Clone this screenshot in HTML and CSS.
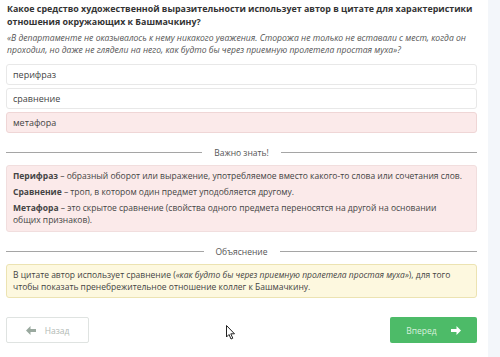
FILE: index.html
```html
<!DOCTYPE html>
<html lang="ru">
<head>
    <meta charset="UTF-8">
    <meta name="viewport" content="width=device-width, initial-scale=1.0">
    <title>Задание</title>
    <link rel="stylesheet" href="styles.css">
</head>
<body>
    <div class="page">
        <div class="task">
            <h1 class="question">Какое средство художественной выразительности использует автор в цитате для характеристики отношения окружающих к Башмачкину?</h1>
            <p class="quote">«В департаменте не оказывалось к нему никакого уважения. Сторожа не только не вставали с мест, когда он проходил, но даже не глядели на него, как будто бы через приемную пролетела простая муха»?</p>

            <div class="options">
                <div class="option">перифраз</div>
                <div class="option">сравнение</div>
                <div class="option option-wrong">метафора</div>
            </div>

            <div class="divider"><span>Важно знать!</span></div>
            <div class="note note-pink">
                <p><b>Перифраз</b> – образный оборот или выражение, употребляемое вместо какого-то слова или сочетания слов.</p>
                <p><b>Сравнение</b> – троп, в котором один предмет уподобляется другому.</p>
                <p><b>Метафора</b> – это скрытое сравнение (свойства одного предмета переносятся на другой на основании общих признаков).</p>
            </div>

            <div class="divider"><span>Объяснение</span></div>
            <div class="note note-yellow">
                <p>В цитате автор использует сравнение (<i>«как будто бы через приемную пролетела простая муха»</i>), для того чтобы показать пренебрежительное отношение коллег к Башмачкину.</p>
            </div>

            <div class="nav">
                <button class="btn btn-back">
                    <svg width="10" height="9" viewBox="0 0 10 9"><path d="M0 4.5 L4.5 0 L4.5 3 L10 3 L10 6 L4.5 6 L4.5 9 Z" fill="#9aa99f"/></svg>
                    Назад
                </button>
                <button class="btn btn-next">
                    Вперед
                    <svg width="10" height="9" viewBox="0 0 10 9"><path d="M10 4.5 L5.5 0 L5.5 3 L0 3 L0 6 L5.5 6 L5.5 9 Z" fill="#fff"/></svg>
                </button>
            </div>
            <svg class="cursor" width="10" height="15" viewBox="0 0 10 15"><path d="M0.5 0.5 L0.5 12 L3 9.5 L5 14 L6.8 13.2 L4.8 8.8 L8.5 8.8 Z" fill="#fff" stroke="#222" stroke-width="1"/></svg>
        </div>
        <div class="side"></div>
    </div>
</body>
</html>
```

FILE: styles.css
```css
body {
    margin: 0;
    font-family: "Open Sans", Arial, sans-serif;
    color: #444;
    background: #fff;
}
.page {
    display: flex;
    width: 500px;
    height: 357px;
    overflow: hidden;
}
.task {
    position: relative;
    width: 471px;
    padding: 0 11px 0 6px;
}
.side {
    flex: 1;
    background: #f3f6fa;
}
.question {
    margin: 2px 0 0 1px;
    font-size: 8.9px;
    line-height: 13px;
    font-weight: bold;
    color: #333;
}
.quote {
    margin: 4px 0 0 1px;
    font-size: 8.6px;
    line-height: 12px;
    font-style: italic;
    color: #555;
}
.options {
    margin-top: 8px;
    display: flex;
    flex-direction: column;
    gap: 3px;
}
.option {
    height: 19px;
    line-height: 19px;
    padding-left: 6px;
    border: 1px solid #e8e8e8;
    border-radius: 3px;
    font-size: 9px;
    color: #444;
    background: #fff;
}
.option-wrong {
    background: #fbeaea;
    border-color: #efd6d6;
}
.divider {
    display: flex;
    align-items: center;
    gap: 12px;
    margin-top: 14px;
    font-size: 8.5px;
    color: #555;
}
.divider::before,
.divider::after {
    content: "";
    flex: 1;
    height: 1px;
    background: #a5a5a5;
}
.note {
    margin-top: 7px;
    padding: 4px 13px 5px 6px;
    border-radius: 3px;
    font-size: 8.5px;
    line-height: 12px;
    color: #444;
}
.note p {
    margin: 0 0 4px;
}
.note p:last-child {
    margin-bottom: 0;
}
.note-pink {
    background: #fbeaea;
    border: 1px solid #f1dede;
}
.note-yellow {
    background: #fdf8df;
    border: 1px solid #ece3b2;
    padding: 4px 13px 4px 6px;
}
.nav {
    display: flex;
    justify-content: space-between;
    margin-top: 19px;
}
.btn {
    display: flex;
    align-items: center;
    justify-content: center;
    gap: 9px;
    height: 26px;
    border-radius: 2px;
    font-family: "Open Sans", Arial, sans-serif;
    font-size: 8.5px;
}
.btn-back {
    width: 83px;
    background: #fff;
    border: 1px solid #dfe3e1;
    color: #b0b8b3;
}
.btn-next {
    width: 87px;
    background: #4dbb68;
    border: none;
    color: #d8f1de;
    gap: 14px;
}
.cursor {
    position: absolute;
    left: 226px;
    top: 325px;
}
```
